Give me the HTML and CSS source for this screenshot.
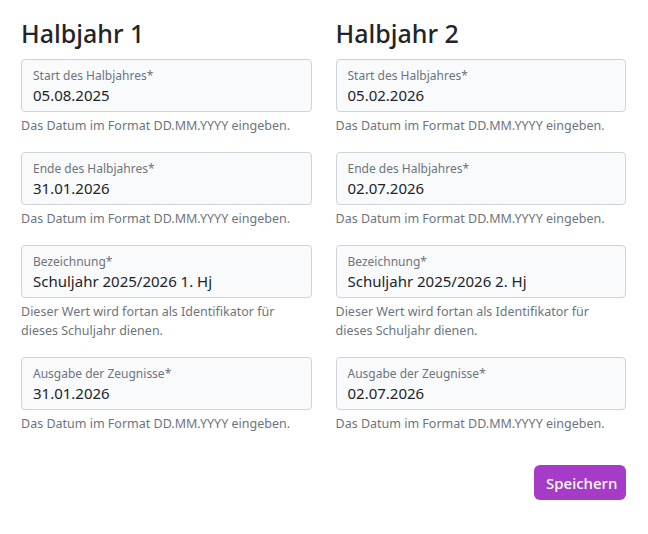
FILE: index.html
```html
<!DOCTYPE html>
<html lang="de">
<head>
<meta charset="utf-8">
<link rel="stylesheet" href="styles.css">
</head>
<body>
<div class="page">
  <div class="cols">
    <section class="col">
      <h2 class="title">Halbjahr 1</h2>
      <div class="group">
        <div class="field"><div class="label">Start des Halbjahres*</div><div class="value">05.08.2025</div></div>
        <div class="help">Das Datum im Format DD.MM.YYYY eingeben.</div>
      </div>
      <div class="group">
        <div class="field"><div class="label">Ende des Halbjahres*</div><div class="value">31.01.2026</div></div>
        <div class="help">Das Datum im Format DD.MM.YYYY eingeben.</div>
      </div>
      <div class="group">
        <div class="field"><div class="label">Bezeichnung*</div><div class="value">Schuljahr 2025/2026 1. Hj</div></div>
        <div class="help">Dieser Wert wird fortan als Identifikator für dieses Schuljahr dienen.</div>
      </div>
      <div class="group">
        <div class="field"><div class="label">Ausgabe der Zeugnisse*</div><div class="value">31.01.2026</div></div>
        <div class="help">Das Datum im Format DD.MM.YYYY eingeben.</div>
      </div>
    </section>
    <section class="col">
      <h2 class="title">Halbjahr 2</h2>
      <div class="group">
        <div class="field"><div class="label">Start des Halbjahres*</div><div class="value">05.02.2026</div></div>
        <div class="help">Das Datum im Format DD.MM.YYYY eingeben.</div>
      </div>
      <div class="group">
        <div class="field"><div class="label">Ende des Halbjahres*</div><div class="value">02.07.2026</div></div>
        <div class="help">Das Datum im Format DD.MM.YYYY eingeben.</div>
      </div>
      <div class="group">
        <div class="field"><div class="label">Bezeichnung*</div><div class="value">Schuljahr 2025/2026 2. Hj</div></div>
        <div class="help">Dieser Wert wird fortan als Identifikator für dieses Schuljahr dienen.</div>
      </div>
      <div class="group">
        <div class="field"><div class="label">Ausgabe der Zeugnisse*</div><div class="value">02.07.2026</div></div>
        <div class="help">Das Datum im Format DD.MM.YYYY eingeben.</div>
      </div>
    </section>
  </div>
  <div class="actions">
    <button class="btn" type="button">Speichern</button>
  </div>
</div>
</body>
</html>
```
FILE: styles.css
```css
* { box-sizing: border-box; }
html, body { margin: 0; background: #fff; }
body {
  font-family: "Noto Sans", "Open Sans", sans-serif;
  color: #212529;
}
.page { padding: 16px 22px 0 21px; }
.cols {
  display: grid;
  grid-template-columns: 1fr 1fr;
  column-gap: 24px;
}
.title {
  margin: 0 0 8px;
  font-size: 25px;
  font-weight: 500;
  line-height: 35px;
  color: #212529;
}
.group { margin-bottom: 16.5px; }
.field {
  border: 1px solid #ced4da;
  border-radius: 4px;
  background: #f9fafb;
  padding: 7px 11px 5px;
  height: 53px;
}
.label {
  font-size: 12px;
  line-height: 17px;
  color: #6c757d;
}
.value {
  font-size: 15px;
  line-height: 22px;
  font-weight: 400;
  color: #212529;
}
.help {
  margin-top: 4px;
  font-size: 12.5px;
  line-height: 19.25px;
  color: #6c757d;
}
.actions {
  display: flex;
  justify-content: flex-end;
  padding-top: 16px;
}
.btn {
  font-family: inherit;
  background: #a63bc7;
  color: #fff;
  border: 0;
  border-radius: 6px;
  font-size: 15px;
  font-weight: 500;
  height: 35px;
  padding: 0 12px;
  width: 92px;
}
```
